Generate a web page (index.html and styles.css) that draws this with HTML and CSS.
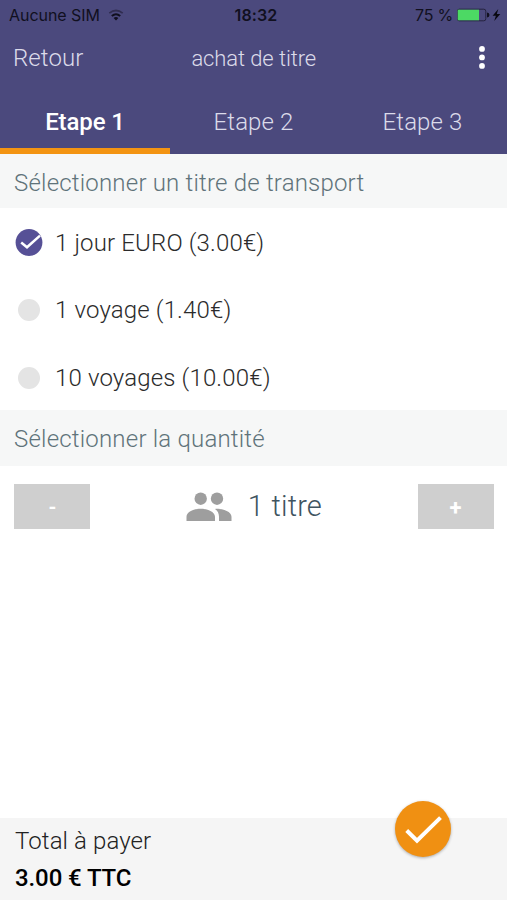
FILE: index.html
```html
<!DOCTYPE html>
<html lang="fr">
<head>
<meta charset="utf-8">
<title>achat de titre</title>
<link rel="stylesheet" href="styles.css">
</head>
<body>
<div class="screen">
  <header class="top">
    <div class="status">
      <div class="carrier"><span>Aucune SIM</span>
        <svg class="wifi" width="16" height="12" viewBox="0 0 16 12" fill="none" stroke="#11101f" stroke-width="2"><path d="M1.3 4.2Q8-1.2 14.7 4.2" stroke="#302d50" stroke-width="1.7"/><path d="M3.8 7Q8 3.4 12.2 7"/><path d="M8 11.5 5.6 9Q8 7.2 10.4 9Z" fill="#11101f" stroke="none"/></svg>
      </div>
      <span class="clock">18:32</span>
      <div class="power"><span class="percent">75 %</span>
        <svg width="46" height="14" viewBox="0 0 46 14"><rect x=".2" y="1.2" width="28.6" height="11.6" rx="2" fill="none" stroke="#25233f" stroke-width="1"/><rect x=".7" y="1.7" width="21.3" height="10.6" fill="#4cd964"/><path d="M30 4.5q2.5 .4 2.5 2.500t-2.500 2.500z" fill="#11101f"/><path d="M41.300 1 35.600 7.800h3.300l-1.700 5.200L43.300 6h-3.500z" fill="#090810"/></svg>
      </div>
    </div>
    <div class="bar">
      <span class="back">Retour</span>
      <h1 class="title">achat de titre</h1>
      <svg class="more" width="8" height="26" viewBox="0 0 8 26" fill="#fff"><circle cx="4" cy="3.9" r="2.9"/><circle cx="4" cy="12.4" r="2.9"/><circle cx="4" cy="20.9" r="2.9"/></svg>
    </div>
    <nav class="tabs">
      <span class="tab active">Etape 1</span>
      <span class="tab">Etape 2</span>
      <span class="tab">Etape 3</span>
    </nav>
  </header>
  <main class="content">
    <h2 class="section">Sélectionner un titre de transport</h2>
    <ul class="options">
      <li class="option"><svg class="check" width="28" height="28" viewBox="0 0 28 28"><circle cx="14" cy="13.5" r="13.4" fill="#565096"/><path d="M6.2 13.5 12 18.3 25 6.6" fill="none" stroke="#fff" stroke-width="2.5"/></svg><span>1 jour EURO (3.00€)</span></li>
      <li class="option"><i class="dot"></i><span>1 voyage (1.40€)</span></li>
      <li class="option"><i class="dot"></i><span>10 voyages (10.00€)</span></li>
    </ul>
    <h2 class="section quantity-title">Sélectionner la quantité</h2>
    <div class="quantity">
      <button class="step minus">-</button>
      <div class="count">
        <svg width="46" height="29" viewBox="0 0 46 29" fill="#9e9e9e"><circle cx="14.7" cy="6.7" r="6.2"/><circle cx="31" cy="6.7" r="6.2"/><path d="M.5 29v-4.2C.5 20 7.6 16.8 14.7 16.8S29 20 29 24.8V29zM30 16.8c8 0 15.5 3 15.5 8V29H33v-4.2c0-3.5-1.3-6.2-4-7.900z"/></svg>
        <span>1 titre</span>
      </div>
      <button class="step">+</button>
    </div>
  </main>
  <footer class="total">
    <span class="label">Total à payer</span>
    <strong class="amount">3.00 € TTC</strong>
    <button class="confirm" aria-label="Valider"><svg width="56" height="56" viewBox="0 0 56 56"><path d="M11.7 29.5 22 39.7 45.5 16.6" fill="none" stroke="#fff" stroke-width="4"/></svg></button>
  </footer>
</div>
</body>
</html>
```

FILE: styles.css
```css
* { box-sizing: border-box; }
body { margin: 0; background: #fff; font-family: Roboto, sans-serif; font-weight: 300; }
h1, h2, ul { margin: 0; padding: 0; font-weight: inherit; list-style: none; }
button { border: 0; padding: 0; font-family: inherit; }
svg { display: block; }
.screen { height: 900px; display: flex; flex-direction: column; overflow: hidden; }
.top { height: 154px; background: #4b497d; color: #dcdbea; }
.status { height: 30px; display: grid; grid-template-columns: 1fr auto 1fr; align-items: center; padding: 0 4px 0 9px; font-family: Inter, sans-serif; font-size: 16px; font-weight: 400; color: #11101f; }
.carrier, .power { display: flex; align-items: center; }
.carrier { gap: 8px; letter-spacing: -.05px; }
.clock { font-weight: 600; letter-spacing: .1px; }
.power { justify-content: flex-end; gap: 4px; }
.percent { letter-spacing: -.2px; }
.bar { height: 56px; display: grid; grid-template-columns: 1fr auto 1fr; align-items: center; padding: 0 21.5px 0 13px; }
.back { font-size: 24px; letter-spacing: .1px; }
.title { padding-left: 9px; font-size: 22px; letter-spacing: -.1px; }
.more { justify-self: end; }
.tabs { height: 68px; display: grid; grid-template-columns: repeat(3, 1fr); }
.tab { text-align: center; font-size: 24px; line-height: 72px; letter-spacing: .1px; }
.active { height: 68px; margin-right: -1px; color: #fff; font-weight: 500; letter-spacing: -.1px; border-bottom: 6px solid #f39412; }
.content { flex: 1; }
.section { height: 54px; padding-left: 14px; background: #f6f7f7; color: #60737a; font-size: 24px; line-height: 58px; letter-spacing: .2px; }
.options { height: 202px; }
.option { height: 67.5px; display: flex; align-items: center; gap: 12px; padding: 2px 0 0 15px; color: #2b2b2b; font-size: 24px; letter-spacing: .15px; }
.dot { width: 22px; height: 22px; margin: 0 3px; border-radius: 50%; background: #e4e4e4; }
.quantity-title { height: 56px; }
.quantity { display: flex; justify-content: space-between; padding: 17.5px 13.5px 0 14.4px; }
.step { width: 76px; height: 45.9px; padding-top: 2px; background: #cfcfcf; color: #fff; font-size: 22px; font-weight: 700; }
.minus { font-size: 20px; }
.count { display: flex; align-items: center; gap: 16px; color: #40545f; font-size: 29px; letter-spacing: .2px; }
.total { position: relative; height: 82px; display: flex; flex-direction: column; padding: 8px 15px; background: #f5f5f5; color: #222; font-size: 24px; line-height: 30px; }
.label { letter-spacing: .1px; }
.amount { margin-top: 7px; color: #000; font-weight: 500; letter-spacing: -.1px; }
.confirm { position: absolute; left: 395px; top: -17px; width: 56px; height: 56px; border-radius: 50%; background: #f09012; box-shadow: 0 1px 3px rgba(0, 0, 0, .3); }
```
